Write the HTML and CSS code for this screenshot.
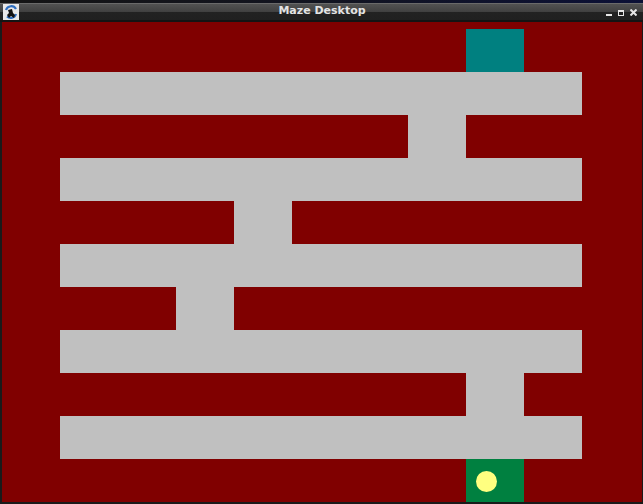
FILE: index.html
```html
<!DOCTYPE html>
<html>
<head>
<meta charset="utf-8">
<link rel="stylesheet" href="styles.css">
</head>
<body>
<div class="desktop-strip"></div>
<div class="window">
  <div class="titlebar">
    <div class="app-icon">
      <svg width="16" height="16" viewBox="0 0 16 16">
        <rect x="0" y="0" width="16" height="16" fill="#e8e8e8"/>
        <path d="M3 6 A5.5 5.5 0 0 1 13 5" stroke="#2f6fc0" stroke-width="2.2" fill="none"/>
        <path d="M13 10 A5.5 5.5 0 0 1 4 12.5" stroke="#2f6fc0" stroke-width="2.2" fill="none"/>
        <path d="M5 6 L9 5 L10 9 L12 11 L11 14 L8 12 L6 14 L4 11 L6 9 Z" fill="#111"/>
      </svg>
    </div>
    <div class="title">Maze Desktop</div>
    <div class="controls">
      <span class="btn-min"></span>
      <span class="btn-max"></span>
      <svg class="btn-close" width="7" height="7" viewBox="0 0 7 7">
        <path d="M0.5 0.5 L6.5 6.5 M6.5 0.5 L0.5 6.5" stroke="#e6e6e6" stroke-width="2"/>
      </svg>
    </div>
  </div>
  <div class="content">
    <div class="maze">
      <div class="cell start" style="grid-column:9;grid-row:1"></div>
      <div class="cell path" style="grid-column:2 / 11;grid-row:2"></div>
      <div class="cell path" style="grid-column:8;grid-row:3"></div>
      <div class="cell path" style="grid-column:2 / 11;grid-row:4"></div>
      <div class="cell path" style="grid-column:5;grid-row:5"></div>
      <div class="cell path" style="grid-column:2 / 11;grid-row:6"></div>
      <div class="cell path" style="grid-column:4;grid-row:7"></div>
      <div class="cell path" style="grid-column:2 / 11;grid-row:8"></div>
      <div class="cell path" style="grid-column:9;grid-row:9"></div>
      <div class="cell path" style="grid-column:2 / 11;grid-row:10"></div>
      <div class="cell goal" style="grid-column:9;grid-row:11"><span class="player"></span></div>
    </div>
  </div>
</div>
</body>
</html>
```
FILE: styles.css
```css
html, body {
  margin: 0;
  padding: 0;
}
body {
  width: 643px;
  height: 504px;
  background: #0c1030;
  overflow: hidden;
  font-family: "DejaVu Sans", sans-serif;
}
.desktop-strip {
  height: 3px;
  background: linear-gradient(to right, #141414 0%, #121420 50%, #0b1036 100%);
}
.window {
  width: 643px;
  height: 501px;
  background: #1a1a1a;
  display: flex;
  flex-direction: column;
}
.titlebar {
  height: 19px;
  position: relative;
  display: flex;
  align-items: center;
  border-top: 1px solid #6a6a6a;
  background: linear-gradient(to bottom, #525252 0px, #404040 8px, #222222 8px, #202020 16px, #141414 16px, #141414 18px);
}
.app-icon {
  position: absolute;
  left: 3px;
  top: 0px;
  width: 16px;
  height: 16px;
}
.app-icon svg {
  display: block;
}
.title {
  flex: 1;
  text-align: center;
  color: #e4e4e4;
  font-weight: bold;
  font-size: 11px;
  line-height: 12px;
  margin-top: -4px;
  padding-left: 1px;
}
.controls {
  position: absolute;
  right: 6px;
  top: 5px;
  display: flex;
  align-items: flex-end;
  gap: 6px;
  height: 7px;
}
.btn-min {
  width: 6px;
  height: 2px;
  background: #e6e6e6;
  margin-bottom: 0px;
}
.btn-max {
  width: 4px;
  height: 3px;
  border: 1px solid #e6e6e6;
  border-top-width: 2px;
}
.btn-close {
  display: block;
}
.content {
  margin: 0 1px 2px 2px;
  width: 640px;
  height: 480px;
  background: #800000;
  padding-top: 7px;
  box-sizing: border-box;
}
.maze {
  display: grid;
  grid-template-columns: repeat(11, 58px);
  grid-template-rows: repeat(11, 43px);
}
.cell.path {
  background: #c0c0c0;
}
.cell.start {
  background: #008080;
}
.cell.goal {
  background: #008040;
  position: relative;
}
.player {
  position: absolute;
  left: 10px;
  top: 12px;
  width: 21px;
  height: 21px;
  border-radius: 50%;
  background: #ffff80;
}
```
